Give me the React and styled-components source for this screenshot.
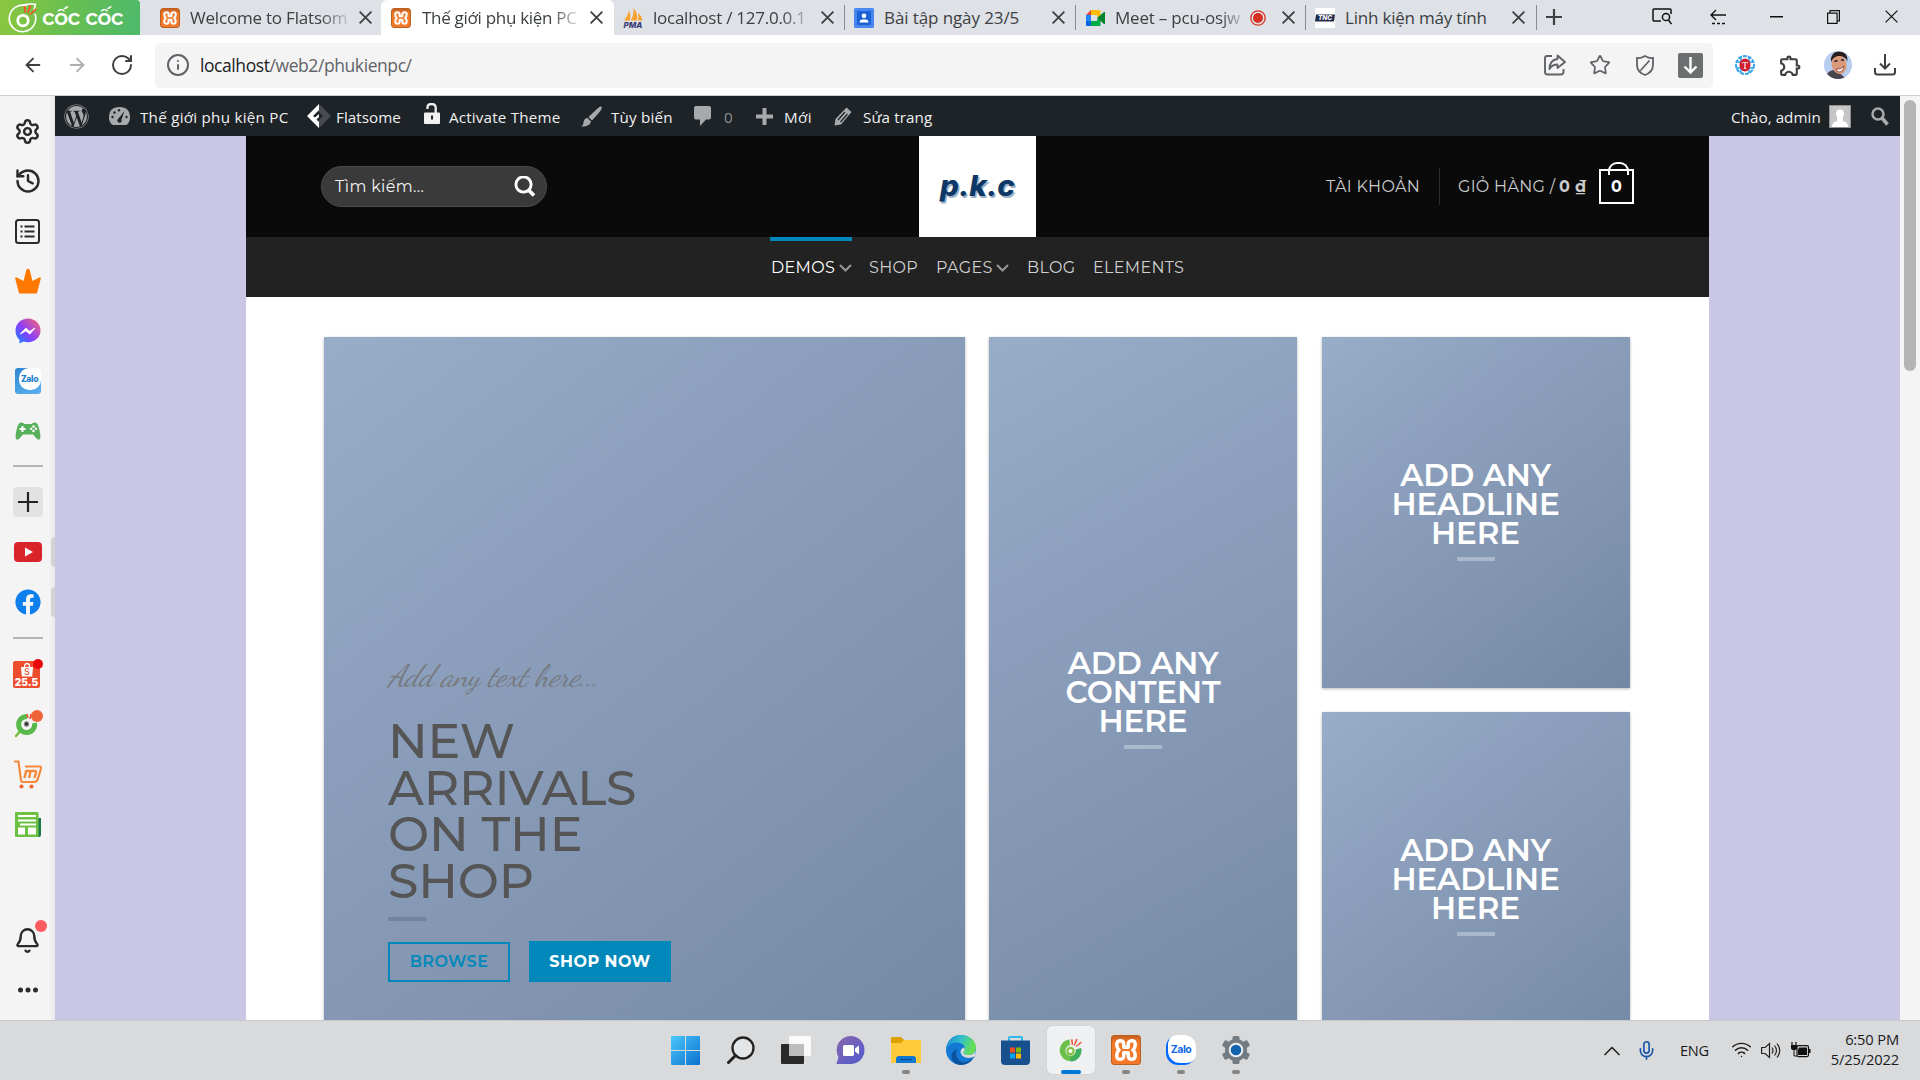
import React from "react";
import styled, { createGlobalStyle } from "styled-components";
import { Settings, History, Star, Bell, Info, ArrowLeft, ArrowRight, RotateCw, Mic, Wifi } from "lucide-react";
import { FaWordpress, FaFacebook } from "react-icons/fa";
import { MdOutlineExtension } from "react-icons/md";

const ui = `"Segoe UI", "Open Sans", "Noto Sans", sans-serif`;
const brand = `Montserrat, Inter, "Open Sans", sans-serif`;

const Global = createGlobalStyle`
  * { box-sizing: border-box; }
  body { margin: 0; overflow: hidden; background: #fff; font-family: ${ui}; }
  svg { display: block; flex: none; }
`;

const Screen = styled.div`
  width: 1920px; height: 1080px; display: flex; flex-direction: column; overflow: hidden;
`;
const Text = styled.span`
  display: block; flex: none; white-space: nowrap; line-height: 1.4;
  width: ${p => (p.$w ? p.$w + "px" : "auto")};
  margin-left: ${p => p.$ml || 0}px;
  padding-top: ${p => p.$pt || 0}px;
  font-family: ${p => (p.$brand ? brand : ui)};
  font-size: ${p => p.$s || 16}px;
  font-weight: ${p => p.$b || 400};
  letter-spacing: ${p => p.$t || 0}px;
  color: ${p => p.$c || "inherit"};
`;
const AdminText = styled(Text)`
  font-size: 15.2px; padding-top: 3px;
`;
const NavText = styled(Text)`
  font-family: ${brand}; font-size: 16px; letter-spacing: 0.32px;
`;
const Slot = styled.div`
  display: flex; align-items: center; justify-content: center; flex: none;
  width: ${p => p.$w}px; margin-left: ${p => p.$ml || 0}px; padding-bottom: ${p => p.$pb || 0}px;
  color: ${p => p.$c || "inherit"};
`;

/* ---------- tab strip ---------- */
const TabStrip = styled.div`
  height: 35px; flex: none; display: flex; background: #dee1e6; color: #3c4043;
`;
const BrandBadge = styled.div`
  width: 140px; height: 35px; margin-right: 10px; display: flex; align-items: center; padding-left: 8px;
  border-top-right-radius: 4px; color: #fff;
  background: linear-gradient(100deg, #8cc63f 0%, #6abf4f 45%, #4cb96b 100%);
`;
const Tab = styled.div`
  width: ${p => p.$w}px; height: 35px; flex: none; display: flex; align-items: center; padding-left: ${p => p.$pl}px;
  background: ${p => (p.$active ? "#fff" : "transparent")};
  border-radius: ${p => (p.$active ? "6px 6px 0 0" : "0")};
`;
const TabTitle = styled(Text)`
  overflow: hidden;
  ${p => p.$fade && "mask-image: linear-gradient(90deg, #000 82%, rgba(0,0,0,.15) 100%);"}
`;
const TabRule = styled.i`
  width: 1px; height: 25px; margin: 0 0 0 auto; background: #888c91;
`;
const Window = styled.div`
  display: flex; align-items: center; height: 33px; color: #111;
`;

/* ---------- toolbar ---------- */
const Toolbar = styled.div`
  height: 61px; flex: none; display: flex; align-items: center; background: #fff; border-bottom: 1px solid #cfd0d1; color: #3c4043;
`;
const AddressBox = styled.div`
  width: 1558px; height: 45px; margin-left: 21px; display: flex; align-items: center; border-radius: 5px; background: #f4f4f4; color: #5f6368;
`;
const Dark = styled.b` font-weight: 400; color: #202124; `;
const DownBadge = styled.div`
  width: 25px; height: 25px; margin-left: 22px; border-radius: 2px; background: #6b6f70; display: grid; place-items: center;
`;
const Avatar = styled.div`
  width: 28px; height: 28px; border-radius: 50%; overflow: hidden; margin-left: 22px; flex: none;
`;

/* ---------- body ---------- */
const Body = styled.div` height: 924px; flex: none; display: flex; `;
const Side = styled.div`
  width: 55px; display: flex; flex-direction: column; align-items: center; background: linear-gradient(90deg, #f4f4f4 88%, #e9eae8 100%);
  color: #2b2b2b; padding-top: 10px;
`;
const SideItem = styled.div`
  width: 55px; height: ${p => p.$h || 50}px; display: flex; align-items: center; justify-content: center; position: relative; flex: none;
`;
const SideRule = styled.i` width: 30px; height: 2px; margin: ${p => p.$m}; background: #b5b5b5; flex: none; `;
const AddTile = styled.div`
  width: 30px; height: 30px; border-radius: 4px; background: #e2e2e2; display: grid; place-items: center;
`;
const Handle = styled.i`
  position: absolute; right: 0; top: 10px; width: 4px; height: 30px; background: #d3d4d2; border-radius: 4px 0 0 4px;
`;
const Dot = styled.i`
  position: absolute; width: ${p => p.$d}px; height: ${p => p.$d}px; border-radius: 50%; background: ${p => p.$c};
  left: ${p => p.$x}px; top: ${p => p.$y}px;
`;
const ShopBadge = styled.div`
  width: 27px; height: 27px; margin-right: 2px; border-radius: 2px; background: #ee4d2d; display: flex; flex-direction: column; align-items: center; color: #fff;
  font: 900 10px/10px Inter, sans-serif; padding-top: 1px;
`;
const ZaloSquare = styled.div`
  width: 26px; height: 26px; border-radius: 3px; background: linear-gradient(160deg, #2f86d0, #5ab0ef); padding-left: 4px;
`;
const ZaloBubble = styled.div`
  width: 22px; height: 22px; border-radius: 10px 2px 10px 10px; background: #fff; display: grid; place-items: center;
  color: #1b7fcb; font: 800 8.5px/1 Inter, sans-serif; letter-spacing: -0.3px;
`;

const Main = styled.div` width: 1845px; display: flex; flex-direction: column; background: #cac6e6; `;
const AdminBar = styled.div`
  height: 40px; flex: none; display: flex; align-items: center; background: #1d2327; color: #f0f0f1;
`;
const Site = styled.div`
  width: 1463px; margin-left: 191px; height: 884px; background: #fff; overflow: hidden;
`;
const Header = styled.div`
  height: 101px; display: flex; align-items: center; background: #0a0a0a; color: #ccc;
`;
const SearchBox = styled.div`
  width: 226px; height: 41px; margin: 0 0 0 75px; border-radius: 21px; display: flex; align-items: center; padding: 0 10px 0 13px;
  background: #3a3a3a; border: 1px solid #4b4b4b; color: #f2f2f2; justify-content: space-between; flex: none;
`;
const Logo = styled.div`
  width: 117px; height: 101px; margin-left: 372px; background: #fff; display: grid; place-items: center; flex: none;
`;
const VRule = styled.i` width: 1px; height: 37px; margin-left: 19px; background: #2c2c2c; flex: none; `;
const Bag = styled.div`
  width: 35px; height: 35px; margin-left: 12px; border: 2px solid #fff; position: relative; display: grid; place-items: center;
  color: #fff; font: 700 16px/1 ${brand}; flex: none;
  &::before {
    content: ""; position: absolute; left: 7px; top: -9px; width: 17px; height: 11px;
    border: 2px solid #fff; border-bottom: 0; border-radius: 9px 9px 0 0;
  }
`;
const Menu = styled.div`
  height: 60px; display: flex; background: #222; color: #d0d0d0; padding-left: 524px;
`;
const MenuItem = styled.div`
  width: ${p => p.$w}px; margin-right: ${p => p.$mr}px; height: 60px; display: flex; align-items: center; flex: none;
  justify-content: space-between; padding-bottom: 1px; padding-top: 3px; padding-left: ${p => (p.$active ? 1 : 0)}px;
  color: ${p => (p.$active ? "#fff" : "inherit")};
  box-shadow: ${p => (p.$active ? "inset 0 4px 0 #0088ba" : "none")};
`;
const Grid = styled.div`
  display: grid; grid-template-columns: 640.5px 308px 308px; column-gap: 24.5px; padding: 40px 0 0 78px;
`;
const Column = styled.div` display: flex; flex-direction: column; gap: 24px; `;
const Banner = styled.div`
  height: ${p => p.$h}px; padding: ${p => p.$p}; box-shadow: 0 1px 3px rgba(0,0,0,.28);
  display: flex; flex-direction: column; align-items: ${p => (p.$center ? "center" : "flex-start")};
  background: linear-gradient(${p => p.$angle || 142}deg, #98adc8 0%, #8ca0bd 32%, #8094b0 68%, #7388a3 100%);
`;
const Script = styled.p`
  margin: 0; height: 62px; font: italic 400 31px/40px "Dancing Script", "Liberation Serif", serif; color: #777a80; letter-spacing: -0.35px; white-space: nowrap;
`;
const BigTitle = styled.h1`
  margin: 0; font: 500 49px/46.7px ${brand}; letter-spacing: -0.2px; color: #555; white-space: nowrap;
`;
const Title = styled.h2`
  margin: 0; font: 600 31px/29px ${brand}; letter-spacing: -0.1px; color: #fff; text-align: center; white-space: nowrap;
`;
const Bar = styled.i`
  width: 38px; height: 4px; margin-top: ${p => p.$mt}px; background: ${p => p.$c}; flex: none;
`;
const Buttons = styled.div` display: flex; align-items: flex-end; gap: 19px; margin-top: 20px; `;
const Button = styled.div`
  width: ${p => p.$w}px; height: ${p => p.$h}px; display: grid; place-items: center; border: 2px solid #0088ba;
  background: ${p => (p.$solid ? "#0088ba" : "transparent")}; color: ${p => (p.$solid ? "#fff" : "#0088ba")};
  padding-top: ${p => (p.$solid ? 1 : 0)}px;
  font: ${p => (p.$solid ? 700 : 600)} 16px/1 ${brand}; letter-spacing: 0.48px; white-space: nowrap;
`;
const ScrollTrack = styled.div` width: 20px; background: #f4f4f4; padding: 4px 0 0 4px; `;
const Thumb = styled.div` width: 12px; height: 271px; border-radius: 6px; background: #b4b4b4; `;

/* ---------- taskbar ---------- */
const Taskbar = styled.div`
  height: 60px; flex: none; display: flex; background: #d9dadc; border-top: 1px solid #c9cacc; padding-left: 658px; color: #1b1b1b;
`;
const AppSlot = styled.div`
  width: 55px; height: 59px; display: flex; align-items: center; justify-content: center; position: relative; flex: none; padding-bottom: 1px;
`;
const ActiveTile = styled.div`
  width: 48px; height: 48px; border-radius: 5px; background: #eef0f1; box-shadow: 0 0 1px #aaa; display: flex; justify-content: center; padding-top: 11px;
`;
const Running = styled.i`
  position: absolute; top: 49px; left: ${p => (p.$on ? 17.5 : 23.5)}px; width: ${p => (p.$on ? 20 : 8)}px; height: 4px; border-radius: 2px;
  background: ${p => (p.$on ? "#0078d7" : "#858585")};
`;
const ZaloApp = styled.div`
  width: 30px; height: 30px; border-radius: 12px; background: #fff; display: grid; place-items: center; box-shadow: inset 2px -2px 0 #0068ff;
  color: #1268e8; font: 700 10.5px/1 Inter, sans-serif; letter-spacing: -0.5px; padding-left: 1px;
`;
const XamppBox = styled.div`
  width: ${p => p.$d}px; height: ${p => p.$d}px; border-radius: 3px; background: linear-gradient(#c85f22, #f27a26 25%, #f4772a); border: 1px solid #b8611f;
  display: grid; place-items: center; color: #fff; flex: none;
`;
const Language = styled.span`
  width: 29px; margin-left: 26px; align-self: center; font-size: 14.6px; letter-spacing: -0.3px; flex: none; padding-bottom: 2px;
`;
const Clock = styled.div`
  width: 80px; margin-left: 8px; text-align: right; font-size: 14.7px; line-height: 20px; padding-top: 8px; letter-spacing: -0.15px;
`;

const Cross = ({ s = 13, w = 1.8 }) => (
  <svg width={s} height={s} viewBox="0 0 13 13" stroke="currentColor" strokeWidth={w} fill="none"><path d="M.6.6l11.8 11.8M12.4.6L.6 12.4" /></svg>
);
const Chevron = () => (
  <svg width="13" height="8" viewBox="0 0 13 8" fill="none" stroke="#999" strokeWidth="2" strokeLinecap="round"><path d="M1.5 1.5l5 5 5-5" /></svg>
);
const Xampp = ({ d = 20 }) => (
  <XamppBox $d={d}>
    <svg width={d - 4} height={d - 4} viewBox="0 0 16 16" fill="none" stroke="#fff" strokeWidth="2.1" strokeLinecap="round" strokeLinejoin="round">
      <path d="M6.600 6.300V4.300Q6.600 2.300 4.500 2.300T2.300 4.500Q2.300 6.800 3.800 8 2.300 9.200 2.300 11.500T4.500 13.700 6.600 11.700V9.700H9.400V11.700Q9.400 13.700 11.500 13.700T13.700 11.500Q13.700 9.200 12.200 8 13.700 6.800 13.700 4.500T11.500 2.300 9.400 4.300V6.300z" />
    </svg>
  </XamppBox>
);
const CocCoc = ({ s = 24, ring }) => (
  <svg width={s} height={s} viewBox="0 0 24 24" fill="none">
    {ring
      ? <><path d="M15 2.300A10.600 10.600 0 1 0 21.500 8.500" stroke="#fff" strokeWidth="1.300" /><path d="M11 2q5-1.500 11-1l-1.500 6" stroke="#fff" strokeWidth="1.200" />
          <circle cx="12" cy="14" r="4.200" stroke="#fff" strokeWidth="2.200" /></>
      : <><path d="M11 2.400A10.400 10.400 0 1 0 22.300 11l-5.200 2.200A5 5 0 1 1 11.500 8z" fill="#6cc04a" /><path d="M17 12l5-1.500A10 10 0 0 1 12 23.400v-4A6 6 0 0 0 17 12z" fill="#3fae5c" />
          <circle cx="12" cy="13.400" r="3" stroke="#7fc242" strokeWidth="2" fill="#fff" /></>}
    <path d="M12.400 2.500l1.600-.3.500 5.300-1.300.2z" fill="#f0532d" /><path d="M17.300 1.600l1.600.8-2.800 6-1-.6z" fill="#f0532d" /><path d="M22 4.200l.8 1.300-5.200 4.200-.6-.8z" fill="#f0532d" />
  </svg>
);
const Pma = () => (
  <svg width="20" height="20" viewBox="0 0 20 20"><path d="M1 12.500Q5 8 6 2q2 5 1 10.500zM7.800 12.500Q11 7 10.500 0q5 6 3.500 12.500zM15 12.500q1-4 0-8 4 4 4.500 8z" fill="#f9a02f" />
    <text x="10" y="19.500" textAnchor="middle" fontFamily="Inter" fontWeight="800" fontStyle="italic" fontSize="8" fill="#3f3d75">PMA</text></svg>
);
const Contact = () => (
  <svg width="20" height="20" viewBox="0 0 20 20"><rect width="20" height="20" rx="1.500" fill="#4a86f0" /><rect x="3" y="3" width="14" height="14" fill="#1a62d4" /><circle cx="10" cy="7.800" r="2.300" fill="#fff" /><path d="M5.500 14.500q0-3.300 4.500-3.300t4.500 3.300z" fill="#fff" /></svg>
);
const Meet = () => (
  <svg width="19" height="16" viewBox="0 0 19 16"><path d="M0 5l5-5v5z" fill="#ea4335" /><path d="M5 0h8.500q1 0 1 1v5l-3.500 1V5H5z" fill="#fbbc04" /><path d="M0 5h5v6H0z" fill="#2684fc" /><path d="M0 11h5v5H1q-1 0-1-1z" fill="#0066da" /><path d="M5 11h6V9l3.500 1v5q0 1-1 1H5z" fill="#00ac47" /><path d="M11 8l7-6q1-.5 1 .5v11q0 1-1 .5z" fill="#00832d" /></svg>
);
const Tnc = () => (
  <svg width="20" height="20" viewBox="0 0 20 20"><rect width="20" height="20" fill="#fff" /><path d="M1 6.500h19l-1 7H0z" fill="#1f2a49" /><text x="10" y="12.300" textAnchor="middle" fontFamily="Inter" fontWeight="800" fontStyle="italic" fontSize="6.500" fill="#fff">TNC</text></svg>
);

const tabs = [
  { w: 231, pl: 10, icon: <Xampp />, title: "Welcome to Flatsom", tw: 158, ml: 10, fade: true, t: -0.2 },
  { w: 233, pl: 10, icon: <Xampp />, title: "Thế giới phụ kiện PC", tw: 157, ml: 11, fade: true, active: true, t: -0.3 },
  { w: 231, pl: 9, icon: <Pma />, title: "localhost / 127.0.0.1", tw: 157, ml: 10, fade: true, t: -0.25, rule: true },
  { w: 231, pl: 9, icon: <Contact />, title: "Bài tập ngày 23/5", tw: 157, ml: 10, t: -0.1, rule: true },
  { w: 230, pl: 10, icon: <Meet />, title: "Meet – pcu-osjw", tw: 128, ml: 10, fade: true, t: -0.2, rec: true, rule: true },
  { w: 231, pl: 9, icon: <Tnc />, title: "Linh kiện máy tính", tw: 156, ml: 10, t: -0.2, rule: true },
];

function Tabs() {
  return (
    <TabStrip>
      <BrandBadge><CocCoc s={30} ring /><Text $s={22} $b={600} $ml={4} $pt={1} $t={-0.6} $brand>cốc cốc</Text></BrandBadge>
      {tabs.map(t => (
        <Tab key={t.title} $w={t.w} $pl={t.pl} $active={t.active}>
          {t.icon}
          <TabTitle $w={t.tw} $ml={t.ml} $s={17} $t={t.t} $fade={t.fade}>{t.title}</TabTitle>
          {t.rec && <Slot $w={16} $ml={7}><svg width="16" height="16" viewBox="0 0 16 16"><circle cx="8" cy="8" r="7.200" fill="none" stroke="#d93025" strokeWidth="1.300" /><circle cx="8" cy="8" r="5" fill="#d93025" /></svg></Slot>}
          <Slot $w={14} $ml={t.rec ? 15 : 10}><Cross /></Slot>
          {t.rule && <TabRule />}
        </Tab>
      ))}
      <Window>
        <Slot $w={16} $ml={9}><svg width="16" height="16" stroke="#3c4043" strokeWidth="2.200"><path d="M8 0v16M0 8h16" /></svg></Slot>
        <Slot $w={20} $ml={90}><svg width="20" height="17" viewBox="0 0 20 17" fill="none" stroke="#111" strokeWidth="1.500"><path d="M9 13H2q-1 0-1-1V2q0-1 1-1h16q1 0 1 1v4" /><circle cx="14" cy="9" r="3.600" /><path d="M16.500 12l3 4" /></svg></Slot>
        <Slot $w={17} $ml={38}><svg width="17" height="16" viewBox="0 0 17 16" fill="none" stroke="#111" strokeWidth="1.400"><path d="M16 6H1M6 1L1 6l5 5" /><path d="M2 14.500h14" strokeDasharray="3 2" /></svg></Slot>
        <Slot $w={13} $ml={43}><svg width="13" height="2"><rect width="13" height="1.500" fill="#111" /></svg></Slot>
        <Slot $w={13} $ml={44}><svg width="13" height="14" viewBox="0 0 13 14" fill="none" stroke="#111" strokeWidth="1.200"><path d="M.6 3.200h9.500v10.200H.6zM3 3V.6h9.400v10.300H10" /></svg></Slot>
        <Slot $w={13} $ml={45}><Cross w={1.2} /></Slot>
      </Window>
    </TabStrip>
  );
}

function Nav() {
  return (
    <Toolbar>
      <Slot $w={20} $ml={23}><ArrowLeft size={22} strokeWidth={2} /></Slot>
      <Slot $w={20} $ml={24} $c="#acaeb0"><ArrowRight size={22} strokeWidth={2} /></Slot>
      <Slot $w={24} $ml={23}><RotateCw size={24} strokeWidth={2} /></Slot>
      <AddressBox>
        <Slot $w={22} $ml={12}><Info size={24} strokeWidth={2} /></Slot>
        <Text $s={17.5} $ml={11} $w={1333} $t={-0.42} $pt={1}><Dark>localhost</Dark>/web2/phukienpc/</Text>
        <Slot $w={22} $ml={11}><svg width="22" height="22" viewBox="0 0 22 22" fill="none" stroke="currentColor" strokeWidth="1.900" strokeLinejoin="round"><path d="M8 2H3Q1 2 1 4v14q0 2.500 2.500 2.500h13q3 0 3-2.500v-3" /><path d="M13.500 1.500L21 8l-7.500 6v-3.500Q8 10.500 5.500 15 5.500 6 13.500 5z" /></svg></Slot>
        <Slot $w={22} $ml={23}><Star size={22} strokeWidth={1.9} /></Slot>
        <Slot $w={22} $ml={23}><svg width="20" height="21" viewBox="0 0 20 21" fill="none" stroke="currentColor" strokeWidth="1.800"><path d="M10 1q4 2.500 8 2v7q0 7-8 10-8-3-8-10V3q4 .5 8-2zM14.500 5.500l-9 10" /></svg></Slot>
        <DownBadge><svg width="15" height="17" viewBox="0 0 15 17" fill="none" stroke="#fff" strokeWidth="2.400"><path d="M7.500 0v15M1.500 9.500l6 6 6-6" /></svg></DownBadge>
      </AddressBox>
      <Slot $w={20} $ml={22}>
        <svg width="20" height="20" viewBox="0 0 20 20"><circle cx="10" cy="10" r="9" fill="#fff" stroke="#36a3e8" strokeWidth="2" strokeDasharray="4 1" /><path d="M1 7h18M1 13h18M6 2v16M14 2v16" stroke="#36a3e8" strokeWidth="1.500" /><ellipse cx="10" cy="10" rx="5.500" ry="6.500" fill="#d31d2c" /><text x="10" y="13.500" textAnchor="middle" fontFamily="Liberation Serif" fontSize="10" fill="#fff">T</text></svg>
      </Slot>
      <Slot $w={24} $ml={23}><MdOutlineExtension size={25} /></Slot>
      <Avatar>
        <svg width="28" height="28" viewBox="0 0 28 28"><rect width="28" height="28" fill="#b6cdf0" /><path d="M1 28q2-8 8-9l9 5 4 4z" fill="#4a4650" /><ellipse cx="15" cy="13.500" rx="7.500" ry="9.500" fill="#d99a7c" transform="rotate(-12 15 13)" /><path d="M7 11Q6 1 15 .5q9 0 8.500 10Q21 4.500 14 5 9 6 7 11z" fill="#2a1d1b" /><path d="M10.500 10.500l3-1M17 9l3 0" stroke="#2a1d1b" strokeWidth="1.500" /><path d="M12 18q5 1 8-3-1 6-5 6-2 0-3-3z" fill="#fff" stroke="#8a3a34" strokeWidth=".8" /></svg>
      </Avatar>
      <Slot $w={22} $ml={22}><svg width="22" height="22" viewBox="0 0 22 22" fill="none" stroke="currentColor" strokeWidth="2"><path d="M11 0v14M6 9.500l5 5 5-5M1 14v4q0 2.500 2.500 2.500h15Q21 20.500 21 18v-4" /></svg></Slot>
    </Toolbar>
  );
}

function Sidebar() {
  return (
    <Side>
      <SideItem><Settings size={27} strokeWidth={2.2} /></SideItem>
      <SideItem><History size={28} strokeWidth={2.1} /></SideItem>
      <SideItem><svg width="25" height="25" viewBox="0 0 25 25" fill="none" stroke="currentColor" strokeWidth="2"><rect x="1" y="1" width="23" height="23" rx="2.500" /><path d="M5.500 7.500h2M9.500 7.500h10M5.500 12.500h2M9.500 12.500h10M5.500 17.500h2M9.500 17.500h10" /></svg></SideItem>
      <SideItem><svg width="26" height="26" viewBox="0 0 26 26" fill="#ff7800"><path d="M5 25.500q-1 0-1.200-1L.2 10.500Q0 8.800 1.800 9.500L8.500 13 11.300 2q1.700-3 3.400 0l2.800 11 6.700-3.500q1.800-.7 1.600 1L22.200 24.500q-.2 1-1.200 1z" /></svg></SideItem>
      <SideItem><svg width="26" height="26" viewBox="0 0 26 26"><defs><linearGradient id="ms" x1="0" y1="1" x2="1" y2="0"><stop offset="0" stopColor="#0a8bff" /><stop offset=".45" stopColor="#8b3dff" /><stop offset="1" stopColor="#ff6a68" /></linearGradient></defs><path d="M13 .5C6 .5.5 5.500.5 12.500c0 4 1.500 7 4 9.200V25.500l4-2q2 .7 4.500.7c7 0 12.500-5 12.500-11.700S20 .5 13 .5z" fill="url(#ms)" /><path d="M5.500 15.800l5.300-5.600 4 3.200 5.200-3.400-5.200 6-4-3.200z" fill="#fff" stroke="#fff" /></svg></SideItem>
      <SideItem><ZaloSquare><ZaloBubble>Zalo</ZaloBubble></ZaloSquare></SideItem>
      <SideItem><svg width="26" height="18" viewBox="0 0 26 18"><path d="M6 .5q2-.5 3.500 1.500h7Q18 0 20 .5q3 .3 4.500 7.500t.5 9q-1.500 1.500-3.500-.5L18 12.500H8l-3.500 4q-2 2-3.500.5-1-1.800.5-9T6 .5z" fill="#58b05c" /><path d="M7.500 4v6M4.500 7h6" stroke="#fff" strokeWidth="2" /><g fill="#fff"><circle cx="18.500" cy="4.500" r="1.300" /><circle cx="18.500" cy="9" r="1.300" /><circle cx="16.300" cy="6.800" r="1.200" /><circle cx="21" cy="6.800" r="1.300" /></g></svg></SideItem>
      <SideRule $m="9px 0 10px" />
      <SideItem><AddTile><svg width="20" height="20" stroke="#222" strokeWidth="2.200"><path d="M10 0v20M0 10h20" /></svg></AddTile></SideItem>
      <SideItem><svg width="28" height="20" viewBox="0 0 28 20"><rect width="28" height="20" rx="4" fill="#d92429" /><path d="M11 5.500v9l8-4.500z" fill="#fff" /></svg><Handle /></SideItem>
      <SideItem><FaFacebook size={26} color="#0d80ee" /><Handle /></SideItem>
      <SideRule $m="10px 0 11px" />
      <SideItem $h={49}><ShopBadge><svg width="14" height="15" viewBox="0 0 14 15"><path d="M1 5h12l-.8 9.500H1.800z" fill="#fff" /><path d="M4.500 5q0-3.500 2.500-3.500T9.500 5" fill="none" stroke="#fff" strokeWidth="1.300" /><text x="7" y="13" textAnchor="middle" fontFamily="Inter" fontSize="8.500" fontWeight="500" fill="#ee4d2d">S</text></svg>25.5</ShopBadge><Dot $d={10} $c="#e8090c" $x={33} $y={9} /></SideItem>
      <SideItem><svg width="27" height="27" viewBox="0 0 27 27" fill="none"><path d="M2 25l5-6" stroke="#76c043" strokeWidth="2.500" strokeLinecap="round" /><path d="M13 5.500A8 8 0 1 0 20.500 12" stroke="#56b948" strokeWidth="5" /><circle cx="12.500" cy="13" r="3.500" fill="#999" stroke="#fff" /><circle cx="12.500" cy="13" r="1.800" fill="#333" /><path d="M13 3l1 4M17 3l-1 5" stroke="#f0532d" strokeWidth="1.500" /></svg><Dot $d={12} $c="#ee6338" $x={31} $y={11} /></SideItem>
      <SideItem><svg width="28" height="29" viewBox="0 0 28 29" fill="none" stroke="#f7893b" strokeWidth="2.200" strokeLinejoin="round"><path d="M0 1.500h4.500L7 20.500Q7.300 22 9 22h11q3 0 3.800-3L27 8.500Q27.400 6.500 25.500 6.500H11" /><path d="M10.500 18l1.600-7h9q1.300 0 1 1.500L20.500 18M16.500 11l-1.300 7" strokeWidth="2.400" /><circle cx="7.500" cy="26.500" r="1" stroke="#f0652d" /><circle cx="17.500" cy="26.500" r="1" stroke="#f0652d" /></svg></SideItem>
      <SideItem><svg width="26" height="25" viewBox="0 0 26 25"><path d="M22 6h4v17q0 2-2 2h-4z" fill="#1f7a4b" /><rect width="23.500" height="25" rx="1" fill="#6cc142" /><path d="M3 4h18M3 8.500h18M5 12.500h16" stroke="#fff" strokeWidth="1.800" /><path d="M3 15.500h7v7H3zM13 15.500h8v7h-8z" fill="#fff" /></svg></SideItem>
      <SideItem $h={66} />
      <SideItem><Bell size={27} strokeWidth={2.1} /><Dot $d={12} $c="#ff5a60" $x={35} $y={5} /></SideItem>
      <SideItem><svg width="20" height="6" fill="#2b2b2b"><circle cx="2.500" cy="3" r="2.500" /><circle cx="10" cy="3" r="2.500" /><circle cx="17.500" cy="3" r="2.500" /></svg></SideItem>
    </Side>
  );
}

function Admin() {
  return (
    <AdminBar>
      <Slot $w={25} $ml={9} $c="#a7aaad"><FaWordpress size={25} /></Slot>
      <Slot $w={21} $ml={20}><svg width="21" height="18" viewBox="0 0 21 18"><path d="M3.500 18Q0 15 0 10.500 0 0 10.500 0T21 10.500q0 4.500-3.500 7.500z" fill="#a7aaad" /><g fill="#1d2327"><circle cx="3.500" cy="10" r="1.200" /><circle cx="5.500" cy="5.500" r="1.200" /><circle cx="10" cy="3.300" r="1.200" /><circle cx="17.500" cy="10" r="1.200" /><path d="M15.500 4l-3 8.500a2.200 2.200 0 1 1-3.200-.8z" /></g></svg></Slot>
      <AdminText $ml={10} $w={148} $t={0.25}>Thế giới phụ kiện PC</AdminText>
      <Slot $w={24} $ml={19}><svg width="24" height="24" viewBox="0 0 24 24"><path d="M12 0l12 12-12 12-4-4 8-8-8-8z" fill="#484c50" /><path d="M12 0L0 12l12 12V18l-2.500-2.500 2.500-2.500v-3l-4 3.500L6 12l6-6z" fill="#fff" /></svg></Slot>
      <AdminText $ml={5} $w={65} $t={0.05}>Flatsome</AdminText>
      <Slot $w={16} $ml={23} $pb={5}><svg width="16" height="22" viewBox="0 0 16 22"><rect y="9.500" width="16" height="11.500" rx="1" fill="#f0f0f1" /><path d="M3.500 6V4.500q0-3.500 4-3.500t4.200 3.500V10" fill="none" stroke="#f0f0f1" strokeWidth="2.300" /><path d="M8 12.500v4" stroke="#1d2327" strokeWidth="2" /></svg></Slot>
      <AdminText $ml={9} $w={111} $t={0.18}>Activate Theme</AdminText>
      <Slot $w={21} $ml={21}><svg width="21" height="21" viewBox="0 0 21 21" fill="#a7aaad"><path d="M20 .5q2 1-1 5L11 14.500 7.500 11 16.500 2.500Q19 0 20 .5zM6.500 12l3.500 3.500Q8.500 21 0 20.500q2.500-1 2.500-4.500 1-4 4-4z" /></svg></Slot>
      <AdminText $ml={9} $w={61} $t={0.2}>Tùy biến</AdminText>
      <Slot $w={18} $ml={22}><svg width="18" height="20" viewBox="0 0 18 20"><path d="M2 0h13q2 0 2 2v9.500q0 2-2 2h-3L6 20v-6.500H2q-2 0-2-2V2q0-2 2-2z" fill="#a7aaad" /></svg></Slot>
      <AdminText $ml={12} $w={20} $c="#8c8f94">0</AdminText>
      <Slot $w={17} $ml={12}><svg width="17" height="17" stroke="#a7aaad" strokeWidth="4"><path d="M8.500 0v17M0 8.500h17" /></svg></Slot>
      <AdminText $ml={11} $w={30} $t={0.4}>Mới</AdminText>
      <Slot $w={18} $ml={20}><svg width="18" height="19" viewBox="0 0 18 19"><path d="M12.500.5l5 4.500L7 17.500.5 18.500 1.500 12z" fill="#a7aaad" /><path d="M4 13L11 5M6.500 15L13.500 7" stroke="#1d2327" strokeWidth="1.200" /></svg></Slot>
      <AdminText $ml={11} $w={71} $t={0.1}>Sửa trang</AdminText>
      <AdminText $ml={797} $w={91} $t={0.05}>Chào, admin</AdminText>
      <Slot $w={22} $ml={7}><svg width="22" height="23" viewBox="0 0 22 23"><rect width="22" height="23" fill="#8c8f94" /><rect x="1" y="1" width="20" height="21" fill="#c5c5c5" /><circle cx="11" cy="8.500" r="4" fill="#fff" /><path d="M3 22q0-5 5-6v-4h6v4q5 1 5 6z" fill="#fff" /></svg></Slot>
      <Slot $w={18} $ml={20}><svg width="18" height="19" viewBox="0 0 18 19" fill="none" stroke="#a7aaad"><circle cx="7" cy="7" r="5.500" strokeWidth="2.500" /><path d="M11 11l5.500 6.500" strokeWidth="3.600" /></svg></Slot>
    </AdminBar>
  );
}

const menu = [
  { label: "DEMOS", w: 82, mr: 17, active: true, more: true },
  { label: "SHOP", w: 49, mr: 18 },
  { label: "PAGES", w: 73, mr: 18, more: true },
  { label: "BLOG", w: 47, mr: 19 },
  { label: "ELEMENTS", w: 91, mr: 0 },
];

function Page() {
  return (
    <Site>
      <Header>
        <SearchBox>
          <NavText $w={92} $pt={2}>Tìm kiếm...</NavText>
          <svg width="22" height="22" viewBox="0 0 22 22" fill="none" stroke="#fff"><circle cx="9.500" cy="8.500" r="7.600" strokeWidth="2.900" /><path d="M14.500 14l5.500 5.500" strokeWidth="3.800" /></svg>
        </SearchBox>
        <Logo>
          <svg width="84" height="36" viewBox="0 0 84 36">
            <g fontFamily="Inter" fontWeight="800" fontStyle="italic" fontSize="28">
              <text x="5.500" y="29" fill="#9fb0c4" textLength="75" lengthAdjust="spacingAndGlyphs">p.k.c</text>
              <text x="4" y="27" fill="#0b3866" textLength="75" lengthAdjust="spacingAndGlyphs">p.k.c</text>
            </g>
          </svg>
        </Logo>
        <NavText $ml={290} $w={94} $pt={2}>TÀI KHOẢN</NavText>
        <VRule />
        <NavText $ml={18} $w={101} $pt={2}>GIỎ HÀNG /</NavText>
        <NavText $b={700} $w={28} $pt={2}>0 ₫</NavText>
        <Bag>0</Bag>
      </Header>
      <Menu>
        {menu.map(m => (
          <MenuItem key={m.label} $w={m.w} $mr={m.mr} $active={m.active}>
            <NavText>{m.label}</NavText>{m.more && <Chevron />}
          </MenuItem>
        ))}
      </Menu>
      <Grid>
        <Banner $h={726} $p="319px 0 0 64px">
          <Script>Add any text here...</Script>
          <BigTitle>NEW<br />ARRIVALS<br />ON THE<br />SHOP</BigTitle>
          <Bar $mt={12} $c="#73839f" />
          <Buttons>
            <Button $w={122} $h={40}>BROWSE</Button>
            <Button $w={142} $h={41} $solid>SHOP NOW</Button>
          </Buttons>
        </Banner>
        <Banner $h={726} $center $angle={150} $p="312px 0 0 0">
          <Title>ADD ANY<br />CONTENT<br />HERE</Title>
          <Bar $mt={9} $c="#a9b8cc" />
        </Banner>
        <Column>
          {["top", "bottom"].map(k => (
            <Banner key={k} $h={351} $center $p="124px 0 0 0">
              <Title>ADD ANY<br />HEADLINE<br />HERE</Title>
              <Bar $mt={9} $c="#a9b8cc" />
            </Banner>
          ))}
        </Column>
      </Grid>
    </Site>
  );
}

function Desktop() {
  return (
    <Taskbar>
      <AppSlot><svg width="29" height="29" viewBox="0 0 29 29"><defs><linearGradient id="wn" x1="0" y1="0" x2="1" y2="1"><stop offset="0" stopColor="#4cc8fb" /><stop offset="1" stopColor="#0a70ce" /></linearGradient></defs><path d="M0 1q0-1 1-1h13v14H0zM15 0h13q1 0 1 1v13H15zM0 15h14v14H1q-1 0-1-1zM15 15h14v13q0 1-1 1H15z" fill="url(#wn)" /></svg></AppSlot>
      <AppSlot><svg width="28" height="28" viewBox="0 0 28 28" fill="none" stroke="#222"><circle cx="16" cy="12" r="10.500" strokeWidth="2.300" fill="#e3e5e7" /><path d="M8.500 19.500L1.500 26.500" strokeWidth="3" strokeLinecap="round" /></svg></AppSlot>
      <AppSlot><svg width="30" height="28" viewBox="0 0 30 28"><rect y="8" width="23" height="20" rx="1" fill="#2a2a2a" /><rect x="8" width="22" height="20" rx="1" fill="#fafafa" /><path d="M8 8h15v12H8z" fill="#bdbdbd" /></svg></AppSlot>
      <AppSlot><svg width="29" height="28" viewBox="0 0 29 28"><defs><linearGradient id="ch" x1="0" y1="0" x2="1" y2="1"><stop offset="0" stopColor="#8a66ad" /><stop offset="1" stopColor="#4f5bd0" /></linearGradient></defs><path d="M14.500 0a14 14 0 1 1 0 28H1q-1-.5 0-2l1.500-5A14 14 0 0 1 14.500 0z" fill="url(#ch)" /><rect x="7" y="9" width="11" height="11" rx="1.500" fill="#fff" /><path d="M19 12.500l4-3v9l-4-3z" fill="#fff" /></svg></AppSlot>
      <AppSlot><svg width="30" height="26" viewBox="0 0 30 26"><path d="M0 1q0-1 1-1h9l3 3v5H0z" fill="#dca000" /><path d="M0 6h10l3-3h16q1 0 1 1v22H1q-1 0-1-1z" fill="#fdca3c" /><path d="M5 26v-4q0-3 3-3h14q3 0 3 3v4z" fill="#1279d2" /><path d="M9 22.500h12" stroke="#0b4d94" strokeWidth="1.200" /></svg><Running /></AppSlot>
      <AppSlot><svg width="30" height="30" viewBox="0 0 30 30"><defs><linearGradient id="ed" x1="0" y1="0" x2="1" y2=".3"><stop offset="0" stopColor="#1780d0" /><stop offset=".5" stopColor="#32bfd0" /><stop offset="1" stopColor="#66e052" /></linearGradient></defs><circle cx="15" cy="15" r="15" fill="#1479d4" /><path d="M0 14.500C1 5 7 0 15 0c8 0 15 5 15 12.500 0 5-4 7.500-8 7.500s-5-1.500-5-3 2-2 1.500-5S14 7.500 10.500 7.500 2 10 0 14.500z" fill="url(#ed)" /><path d="M11 14q-2.500 7 2 11.500 6 4.500 14.500-3Q23 30 15 30q-7-.5-9.500-6.500Q4.500 17 11 14z" fill="#0d529d" /><path d="M18 12.500q-3.500 1-3.500 5 1.500 5 8 5.500 4.500 0 6.500-2l1-6q-2 5-8 5-4 0-5-2.500 2.500-2.500 1-5z" fill="#d9dadc" /></svg></AppSlot>
      <AppSlot><svg width="29" height="29" viewBox="0 0 29 29"><path d="M8 5V1.500Q8 1 9 1h11q1 0 1 .5V5" fill="none" stroke="#31b8ea" strokeWidth="2" /><path d="M0 4.500h29V25q0 4-4 4H4q-4 0-4-4z" fill="#174f8f" /><path d="M9 11.500h5v5H9z" fill="#f25022" /><path d="M15 11.500h5v5h-5z" fill="#7fba00" /><path d="M9 17.500h5v5H9z" fill="#00a4ef" /><path d="M15 17.500h5v5h-5z" fill="#ffb900" /></svg></AppSlot>
      <AppSlot><ActiveTile><CocCoc s={25} /></ActiveTile><Running $on /></AppSlot>
      <AppSlot><Xampp d={30} /><Running /></AppSlot>
      <AppSlot><ZaloApp>Zalo</ZaloApp><Running /></AppSlot>
      <AppSlot><svg width="30" height="28" viewBox="0 0 30 28"><g fill="#747c83"><circle cx="15" cy="14" r="11" /><rect x="11.500" y="0" width="7" height="28" rx="1.500" /><rect x="11.500" y="-.5" width="7" height="29" rx="1.500" transform="rotate(60 15 14)" /><rect x="11.500" y="-.5" width="7" height="29" rx="1.500" transform="rotate(120 15 14)" /></g><circle cx="15" cy="14" r="6.300" fill="#1263ad" stroke="#eceff1" strokeWidth="2" /></svg><Running /></AppSlot>
      <Slot $w={16} $ml={341}><svg width="16" height="10" viewBox="0 0 16 10" fill="none" stroke="#1b1b1b" strokeWidth="1.500"><path d="M.5 9L8 1.500 15.500 9" /></svg></Slot>
      <Slot $w={16} $ml={18} $c="#1a56a8"><Mic size={21} strokeWidth={1.9} /></Slot>
      <Language>ENG</Language>
      <Slot $w={20} $ml={22} $pb={2}><Wifi size={21} strokeWidth={1.7} /></Slot>
      <Slot $w={20} $ml={10}><svg width="20" height="17" viewBox="0 0 20 17" fill="none" stroke="#222" strokeWidth="1.200"><path d="M.6 5.500h3.500L8.500 1.500v14l-4.400-4H.6zM11 5.500q2 3 0 6M13.500 3.500q4 5 0 10M16 1.500q5.500 7 0 14" /></svg></Slot>
      <Slot $w={20} $ml={10} $pb={2}><svg width="20" height="16" viewBox="0 0 20 16"><path d="M1 0v3M5 0v3" stroke="#111" strokeWidth="1.200" /><path d="M0 3h6v3q0 2-3 2T0 6z" fill="#111" /><path d="M3 7v7h3" stroke="#111" fill="none" /><rect x="6" y="3.600" width="11.500" height="11" rx="1.500" fill="none" stroke="#111" strokeWidth="1.200" /><path d="M8 5.500h8v7.500H7V8z" fill="#111" /><path d="M18 7h1.500v4H18z" fill="#111" /></svg></Slot>
      <Clock>6:50 PM<br />5/25/2022</Clock>
    </Taskbar>
  );
}

export default function App() {
  return (
    <Screen>
      <Global />
      <Tabs />
      <Nav />
      <Body>
        <Sidebar />
        <Main><Admin /><Page /></Main>
        <ScrollTrack><Thumb /></ScrollTrack>
      </Body>
      <Desktop />
    </Screen>
  );
}
